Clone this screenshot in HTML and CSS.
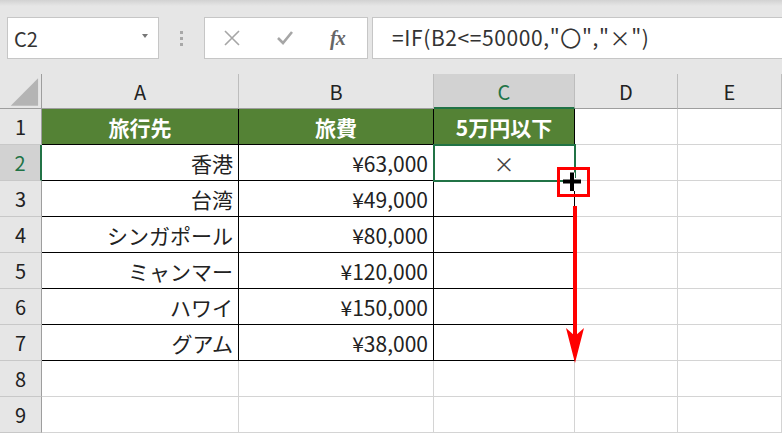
FILE: index.html
```html
<!DOCTYPE html>
<html lang="ja">

<head>
    <meta charset="UTF-8">
    <meta name="viewport" content="width=device-width, initial-scale=1.0">
    <title>IF関数 オートフィル</title>
    <link rel="stylesheet" href="styles.css">
</head>

<body>
    <div class="toolbar">
        <div class="name-box">
            <span>C2</span>
            <span class="caret"></span>
        </div>
        <div class="grip"><i></i><i></i><i></i></div>
        <div class="fx-buttons">
            <svg class="icon" width="16" height="16" viewBox="0 0 16 16">
                <path d="M1 1 L15 15 M15 1 L1 15" stroke="#a6a6a6" stroke-width="1.6" fill="none" />
            </svg>
            <svg class="icon" width="16" height="16" viewBox="0 0 16 16">
                <path d="M1 8 L6 13 L15 2" stroke="#a6a6a6" stroke-width="2.6" fill="none" />
            </svg>
            <span class="fx">fx</span>
        </div>
        <div class="formula">=IF(B2&lt;=50000,"〇","×")</div>
    </div>

    <div class="sheet">
        <!-- 列見出し -->
        <div class="cell corner">
            <svg width="42" height="35" viewBox="0 0 42 35">
                <polygon points="11,32 39,32 39,4" fill="#b4b4b4" />
            </svg>
        </div>
        <div class="cell col-head">A</div>
        <div class="cell col-head">B</div>
        <div class="cell col-head active-col">C</div>
        <div class="cell col-head">D</div>
        <div class="cell col-head">E</div>

        <!-- 1 -->
        <div class="cell row-head">1</div>
        <div class="cell t hd">旅行先</div>
        <div class="cell t hd">旅費</div>
        <div class="cell t hd">5万円以下</div>
        <div class="cell"></div>
        <div class="cell"></div>

        <!-- 2 -->
        <div class="cell row-head active-row">2</div>
        <div class="cell t num">香港</div>
        <div class="cell t num">¥63,000</div>
        <div class="cell t mid current">
            ×
            <div class="selection"><span class="handle"></span></div>
        </div>
        <div class="cell"></div>
        <div class="cell"></div>

        <!-- 3 -->
        <div class="cell row-head">3</div>
        <div class="cell t num">台湾</div>
        <div class="cell t num">¥49,000</div>
        <div class="cell t"></div>
        <div class="cell"></div>
        <div class="cell"></div>

        <!-- 4 -->
        <div class="cell row-head">4</div>
        <div class="cell t num">シンガポール</div>
        <div class="cell t num">¥80,000</div>
        <div class="cell t"></div>
        <div class="cell"></div>
        <div class="cell"></div>

        <!-- 5 -->
        <div class="cell row-head">5</div>
        <div class="cell t num">ミャンマー</div>
        <div class="cell t num">¥120,000</div>
        <div class="cell t"></div>
        <div class="cell"></div>
        <div class="cell"></div>

        <!-- 6 -->
        <div class="cell row-head">6</div>
        <div class="cell t num">ハワイ</div>
        <div class="cell t num">¥150,000</div>
        <div class="cell t"></div>
        <div class="cell"></div>
        <div class="cell"></div>

        <!-- 7 -->
        <div class="cell row-head">7</div>
        <div class="cell t num">グアム</div>
        <div class="cell t num">¥38,000</div>
        <div class="cell t"></div>
        <div class="cell"></div>
        <div class="cell"></div>

        <!-- 8 -->
        <div class="cell row-head">8</div>
        <div class="cell"></div>
        <div class="cell"></div>
        <div class="cell"></div>
        <div class="cell"></div>
        <div class="cell"></div>

        <!-- 9 -->
        <div class="cell row-head">9</div>
        <div class="cell"></div>
        <div class="cell"></div>
        <div class="cell"></div>
        <div class="cell"></div>
        <div class="cell"></div>
    </div>

    <!-- 注釈: フィルハンドルとドラッグ方向 -->
    <svg class="annot" width="782" height="433" viewBox="0 0 782 433">
        <rect x="558.5" y="168.5" width="30" height="27" fill="none" stroke="#ff0000" stroke-width="3" />
        <path d="M563 181.5 H581 M572 172.5 V191" stroke="#fff" stroke-width="6" />
        <path d="M563 181.5 H581 M572 172.5 V191" stroke="#000" stroke-width="4" />
        <path d="M575 206 V338" stroke="#ff0000" stroke-width="4" />
        <polygon points="566,328 575,336 584,328 575,363" fill="#ff0000" />
    </svg>
</body>

</html>
```

FILE: styles.css
```css
body {
    margin: 0;
    width: 782px;
    height: 433px;
    overflow: hidden;
    position: relative;
    background-color: #fff;
    font-family: "Noto Sans CJK JP", "Noto Sans", sans-serif;
    color: #222;
}

.toolbar {
    height: 74px;
    box-sizing: border-box;
    padding: 17px 0 0 7px;
    display: flex;
    align-items: flex-start;
    background: linear-gradient(to bottom, #d2d2d2 0px, #e6e6e6 6px, #e6e6e6 100%);
}

.name-box {
    width: 152px;
    height: 42px;
    box-sizing: border-box;
    border: 1px solid #c6c6c6;
    background-color: #fff;
    display: flex;
    align-items: center;
    justify-content: space-between;
    padding: 0 10px 0 6px;
    font-size: 20px;
    color: #333;
}

.caret {
    width: 0;
    height: 0;
    border-left: 3px solid transparent;
    border-right: 3px solid transparent;
    border-top: 4px solid #777;
    margin-bottom: 4px;
}

.grip {
    width: 45px;
    height: 42px;
    display: flex;
    flex-direction: column;
    align-items: center;
    justify-content: center;
    gap: 3px;
}

.grip i {
    display: block;
    width: 3px;
    height: 3px;
    background-color: #a8a8a8;
}

.fx-buttons {
    width: 164px;
    height: 42px;
    box-sizing: border-box;
    border: 1px solid #c6c6c6;
    background-color: #fff;
    display: flex;
    align-items: center;
    gap: 37px;
    padding-left: 19px;
}

.fx {
    font-family: "Liberation Serif", serif;
    font-style: italic;
    font-weight: bold;
    font-size: 20px;
    color: #666;
    letter-spacing: -1px;
}

.formula {
    flex: 1;
    margin-left: 4px;
    height: 42px;
    box-sizing: border-box;
    border: 1px solid #c6c6c6;
    border-right: none;
    background-color: #fff;
    padding-left: 19px;
    line-height: 39px;
    font-size: 21px;
    letter-spacing: 0.6px;
    color: #333;
    white-space: nowrap;
}

.sheet {
    display: grid;
    grid-template-columns: 42px 197px 195px 141px 103px 104px;
    grid-template-rows: 35px repeat(9, 36px);
}

.cell {
    box-sizing: border-box;
    border-right: 1px solid #d4d4d4;
    border-bottom: 1px solid #d4d4d4;
    display: flex;
    align-items: center;
    font-size: 21px;
    color: #222;
}

.corner {
    background-color: #e6e6e6;
    border-right-color: #9e9e9e;
    border-bottom-color: #9e9e9e;
}

.col-head {
    background-color: #e6e6e6;
    border-right-color: #bdbdbd;
    border-bottom-color: #9e9e9e;
    justify-content: center;
    padding-top: 1px;
    font-size: 20px;
}

.row-head {
    background-color: #e6e6e6;
    border-right-color: #9e9e9e;
    border-bottom-color: #c8c8c8;
    justify-content: center;
    font-size: 20px;
}

.active-col {
    background-color: #d2d2d2;
    color: #217346;
    border-bottom: 2px solid #217346;
}

.active-row {
    background-color: #d2d2d2;
    color: #217346;
    border-right: 2px solid #217346;
}

.t {
    border-right-color: #000;
    border-bottom-color: #000;
}

.hd {
    background-color: #548235;
    color: #fff;
    font-weight: bold;
    justify-content: center;
}

.num {
    justify-content: flex-end;
    padding-right: 5px;
}

.mid {
    justify-content: center;
    color: #444;
}

.current {
    position: relative;
}

.selection {
    position: absolute;
    left: -1px;
    top: -1px;
    right: -2px;
    bottom: -2px;
    border: 2px solid #217346;
}

.handle {
    position: absolute;
    right: -5px;
    bottom: -5px;
    width: 5px;
    height: 5px;
    background-color: #217346;
    border: 1px solid #fff;
}

.annot {
    position: absolute;
    left: 0;
    top: 0;
    pointer-events: none;
}
```
